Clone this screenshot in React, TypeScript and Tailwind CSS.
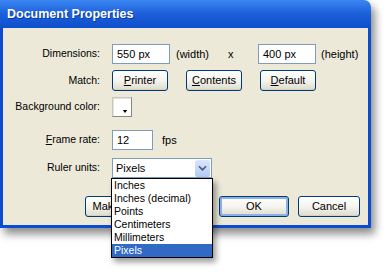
import React from "react";

/* ---------------------------------------------------------------- bits */
const font = "font-['Liberation_Sans',Arial,sans-serif]";

const Label = ({ children }: { children: React.ReactNode }) => (
  <span className="w-[97px] shrink-0 text-right text-[10.5px] text-black">{children}</span>
);

const Field = ({ value, w }: { value: string; w: string }) => (
  <div className={`${w} flex h-[20px] items-center border border-[#7f9db9] bg-white pl-[4px] text-[11px] text-black`}>{value}</div>
);

const Btn = ({ children, w, primary }: { children: React.ReactNode; w: string; primary?: boolean }) => (
  <div
    className={`${w} flex h-[21px] shrink-0 items-center justify-center rounded-[3px] border border-[#003c74] bg-gradient-to-b from-[#ffffff] via-[#f5f4ee] to-[#dedbce] text-[11px] text-black ${
      primary ? "shadow-[inset_0_0_0_2px_#8eb0e8]" : "shadow-[inset_0_-1px_0_#d6d0c0]"
    }`}
  >
    {children}
  </div>
);

const UNITS = ["Inches", "Inches (decimal)", "Points", "Centimeters", "Millimeters", "Pixels"];

export default function App() {
  return (
    <div className={`relative h-[275px] w-[386px] overflow-hidden bg-white ${font}`}>
      {/* dialog window */}
      <div className="flex h-[228px] w-[371px] flex-col rounded-tr-[7px] shadow-[4px_6px_8px_rgba(0,0,0,0.45)]">
        {/* title bar */}
        <div className="flex h-[28px] shrink-0 items-center rounded-tr-[7px] bg-gradient-to-b from-[#3b86f2] via-[#1c5fd9] to-[#0e4fcc] pl-[7px]">
          <span className="text-[12.5px] font-bold text-white [text-shadow:1px_1px_0_#0a3a9e]">Document Properties</span>
        </div>

        {/* body */}
        <div className="flex flex-1 flex-col border-x-[3px] border-b-[3px] border-[#0b4cd0] bg-[#ece9d8] pt-[16px]">
          {/* dimensions */}
          <div className="flex items-center gap-[12px]">
            <Label>Dimensions:</Label>
            <div className="flex items-center text-[11px] text-black">
              <Field value="550 px" w="w-[58px]" />
              <span className="ml-[6px] w-[52px]">(width)</span>
              <span className="w-[30px]">x</span>
              <Field value="400 px" w="w-[58px]" />
              <span className="ml-[5px]">(height)</span>
            </div>
          </div>

          {/* match */}
          <div className="mt-[6px] flex items-center gap-[12px]">
            <Label>Match:</Label>
            <div className="flex items-center gap-[18px]">
              <Btn w="w-[56px]"><u>P</u>rinter</Btn>
              <Btn w="w-[56px]"><u>C</u>ontents</Btn>
              <Btn w="w-[56px]"><u>D</u>efault</Btn>
            </div>
          </div>

          {/* background colour */}
          <div className="mt-[6px] flex items-center gap-[12px]">
            <Label>Background color:</Label>
            <div className="relative h-[20px] w-[20px] border border-t-[#c9c6b8] border-l-[#c9c6b8] border-r-[#8a887e] border-b-[#8a887e] bg-white shadow-[inset_1px_1px_0_#e6e4da]">
              <svg viewBox="0 0 6 4" className="absolute bottom-[3px] right-[3px] h-[3px] w-[6px]">
                <path d="M0 0h6L3 4z" fill="#000" />
              </svg>
            </div>
          </div>

          {/* frame rate */}
          <div className="mt-[13px] flex items-center gap-[12px]">
            <Label><u>F</u>rame rate:</Label>
            <Field value="12" w="w-[41px]" />
            <span className="ml-[-3px] text-[11px] text-black">fps</span>
          </div>

          {/* ruler units */}
          <div className="mt-[8px] flex items-center gap-[12px]">
            <Label>Ruler units:</Label>
            <div className="flex h-[20px] w-[100px] items-center justify-between border border-[#7f9db9] bg-white pl-[3px] pr-[1px] text-[11px] text-black">
              <span>Pixels</span>
              <span className="flex h-[17px] w-[15px] items-center justify-center rounded-[2px] bg-gradient-to-b from-[#dbe6fd] to-[#b3c9f5]">
                <svg viewBox="0 0 10 8" className="h-[7px] w-[9px]" fill="none">
                  <path d="M1.5 2l3.5 3.5L8.5 2" stroke="#4d6185" strokeWidth="2" strokeLinecap="round" strokeLinejoin="round" />
                </svg>
              </span>
            </div>
          </div>

          {/* buttons — "Make Default" sits partly under the open list */}
          <div className="mt-[18px] flex items-center pl-[82px]">
            <Btn w="w-[80px]">Make Default</Btn>
            <div className="ml-[54px]"><Btn w="w-[70px]" primary>OK</Btn></div>
            <div className="ml-[9px]"><Btn w="w-[62px]">Cancel</Btn></div>
          </div>
        </div>
      </div>

      {/* open dropdown list */}
      <div className="absolute left-[111px] top-[178px] w-[102px] border border-black bg-white shadow-[3px_4px_6px_rgba(0,0,0,0.4)]">
        {UNITS.map((u) => (
          <div
            key={u}
            className={`flex h-[13px] items-center pl-[2px] text-[10.5px] leading-none ${u === "Pixels" ? "bg-[#316ac5] text-white" : "text-black"}`}
          >
            {u}
          </div>
        ))}
      </div>
    </div>
  );
}
